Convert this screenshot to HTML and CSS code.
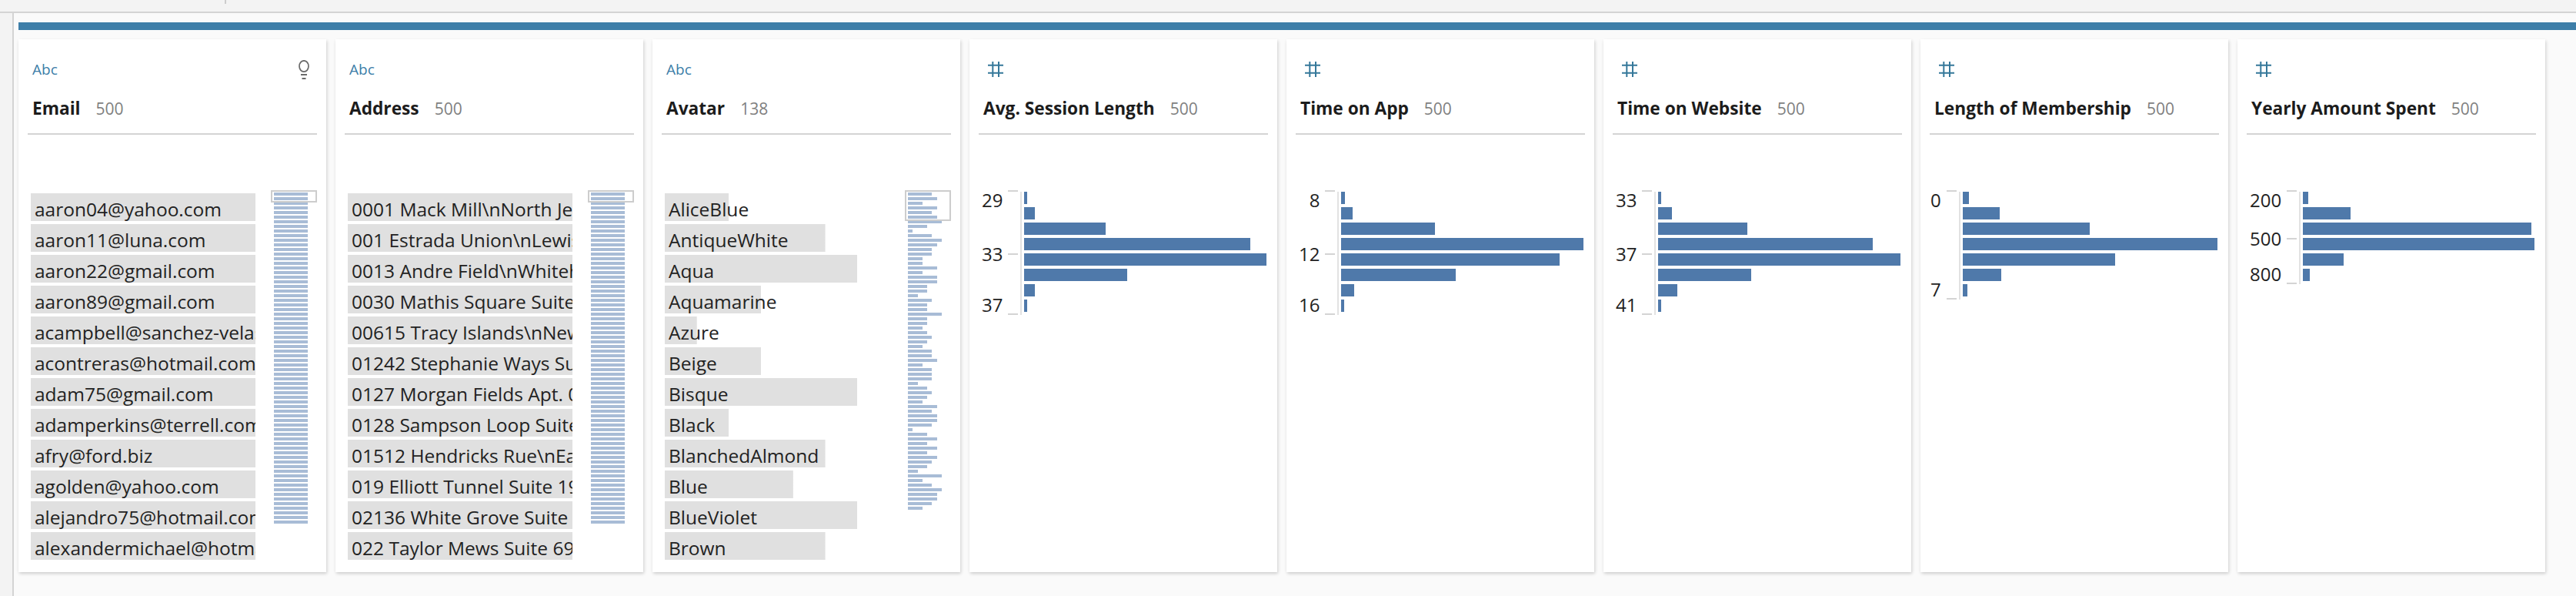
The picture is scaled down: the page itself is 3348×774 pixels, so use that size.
FILE: index.html
```html
<!DOCTYPE html>
<html>
<head>
    <meta charset="UTF-8">
    <title>Profile</title>
    <link rel="stylesheet" href="styles.css">
</head>
<body>
    <div class="topbar"><span class="topbar-tick"></span></div>
    <div class="page">
        <div class="rail"></div>
        <div class="content">
            <div class="step-bar"></div>
            <div class="cards">

                <div class="card">
                    <div class="card-head">
                        <div class="type-row">
                            <span class="type-abc">Abc</span>
                            <svg class="bulb" width="14" height="25" viewBox="0 0 14 25"><ellipse cx="7" cy="8" rx="6" ry="7.2" fill="none" stroke="#6a6a6a" stroke-width="1.7"/><path d="M3 19h8M4.5 24h5" stroke="#6a6a6a" stroke-width="2" fill="none"/></svg>
                        </div>
                        <div class="title-row"><span class="title">Email</span><span class="count">500</span></div>
                    </div>
                    <div class="card-body">
                        <div class="rows">
                            <div class="row">aaron04@yahoo.com</div>
                            <div class="row">aaron11@luna.com</div>
                            <div class="row">aaron22@gmail.com</div>
                            <div class="row">aaron89@gmail.com</div>
                            <div class="row">acampbell@sanchez-velasquez.com</div>
                            <div class="row">acontreras@hotmail.com</div>
                            <div class="row">adam75@gmail.com</div>
                            <div class="row">adamperkins@terrell.com</div>
                            <div class="row">afry@ford.biz</div>
                            <div class="row">agolden@yahoo.com</div>
                            <div class="row">alejandro75@hotmail.com</div>
                            <div class="row">alexandermichael@hotmail.com</div>
                        </div>
                        <div class="minimap minimap-full"><div class="viewport"></div></div>
                    </div>
                </div>

                <div class="card">
                    <div class="card-head">
                        <div class="type-row"><span class="type-abc">Abc</span></div>
                        <div class="title-row"><span class="title">Address</span><span class="count">500</span></div>
                    </div>
                    <div class="card-body">
                        <div class="rows">
                            <div class="row">0001 Mack Mill\nNorth Jerry</div>
                            <div class="row">001 Estrada Union\nLewisburgh</div>
                            <div class="row">0013 Andre Field\nWhitehaven</div>
                            <div class="row">0030 Mathis Square Suite 100</div>
                            <div class="row">00615 Tracy Islands\nNew Paul</div>
                            <div class="row">01242 Stephanie Ways Suite 100</div>
                            <div class="row">0127 Morgan Fields Apt. 001</div>
                            <div class="row">0128 Sampson Loop Suite 100</div>
                            <div class="row">01512 Hendricks Rue\nEast Ann</div>
                            <div class="row">019 Elliott Tunnel Suite 199</div>
                            <div class="row">02136 White Grove Suite 100</div>
                            <div class="row">022 Taylor Mews Suite 699</div>
                        </div>
                        <div class="minimap minimap-full"><div class="viewport"></div></div>
                    </div>
                </div>

                <div class="card">
                    <div class="card-head">
                        <div class="type-row"><span class="type-abc">Abc</span></div>
                        <div class="title-row"><span class="title">Avatar</span><span class="count">138</span></div>
                    </div>
                    <div class="card-body">
                        <div class="rows">
                            <div class="row" style="background-size: 28.57% 100%">AliceBlue</div>
                            <div class="row" style="background-size: 71.43% 100%">AntiqueWhite</div>
                            <div class="row" style="background-size: 85.71% 100%">Aqua</div>
                            <div class="row" style="background-size: 42.86% 100%">Aquamarine</div>
                            <div class="row" style="background-size: 14.29% 100%">Azure</div>
                            <div class="row" style="background-size: 42.86% 100%">Beige</div>
                            <div class="row" style="background-size: 85.71% 100%">Bisque</div>
                            <div class="row" style="background-size: 28.57% 100%">Black</div>
                            <div class="row" style="background-size: 71.43% 100%">BlanchedAlmond</div>
                            <div class="row" style="background-size: 57.14% 100%">Blue</div>
                            <div class="row" style="background-size: 85.71% 100%">BlueViolet</div>
                            <div class="row" style="background-size: 71.43% 100%">Brown</div>
                        </div>
                        <div class="minimap" id="avatarMap"><div class="viewport viewport-tall"></div></div>
                    </div>
                </div>

                <div class="card">
                    <div class="card-head">
                        <div class="type-row"><svg class="hash" width="20" height="20" viewBox="0 0 20 20"><path d="M6.3 0v20M14 0v20M0 4.7h20M0 14.7h20"/></svg></div>
                        <div class="title-row"><span class="title">Avg. Session Length</span><span class="count">500</span></div>
                    </div>
                    <div class="card-body">
                        <div class="chart">
                            <div class="axis">
                                <div class="tick"><span>29</span></div>
                                <div class="tick tick-mid"><span>33</span></div>
                                <div class="tick tick-end"><span>37</span></div>
                            </div>
                            <div class="axis-line"></div>
                            <div class="bars">
                                <div class="bar" style="width: 1%"></div>
                                <div class="bar" style="width: 4.4%"></div>
                                <div class="bar" style="width: 33.6%"></div>
                                <div class="bar" style="width: 93.2%"></div>
                                <div class="bar" style="width: 100%"></div>
                                <div class="bar" style="width: 42.4%"></div>
                                <div class="bar" style="width: 4.4%"></div>
                                <div class="bar" style="width: 1%"></div>
                            </div>
                        </div>
                    </div>
                </div>

                <div class="card">
                    <div class="card-head">
                        <div class="type-row"><svg class="hash" width="20" height="20" viewBox="0 0 20 20"><path d="M6.3 0v20M14 0v20M0 4.7h20M0 14.7h20"/></svg></div>
                        <div class="title-row"><span class="title">Time on App</span><span class="count">500</span></div>
                    </div>
                    <div class="card-body">
                        <div class="chart">
                            <div class="axis">
                                <div class="tick"><span>8</span></div>
                                <div class="tick tick-mid"><span>12</span></div>
                                <div class="tick tick-end"><span>16</span></div>
                            </div>
                            <div class="axis-line"></div>
                            <div class="bars">
                                <div class="bar" style="width: 1.4%"></div>
                                <div class="bar" style="width: 4.6%"></div>
                                <div class="bar" style="width: 38.6%"></div>
                                <div class="bar" style="width: 100%"></div>
                                <div class="bar" style="width: 90.2%"></div>
                                <div class="bar" style="width: 47.2%"></div>
                                <div class="bar" style="width: 5.3%"></div>
                                <div class="bar" style="width: 1%"></div>
                            </div>
                        </div>
                    </div>
                </div>

                <div class="card">
                    <div class="card-head">
                        <div class="type-row"><svg class="hash" width="20" height="20" viewBox="0 0 20 20"><path d="M6.3 0v20M14 0v20M0 4.7h20M0 14.7h20"/></svg></div>
                        <div class="title-row"><span class="title">Time on Website</span><span class="count">500</span></div>
                    </div>
                    <div class="card-body">
                        <div class="chart">
                            <div class="axis">
                                <div class="tick"><span>33</span></div>
                                <div class="tick tick-mid"><span>37</span></div>
                                <div class="tick tick-end"><span>41</span></div>
                            </div>
                            <div class="axis-line"></div>
                            <div class="bars">
                                <div class="bar" style="width: 1%"></div>
                                <div class="bar" style="width: 5.6%"></div>
                                <div class="bar" style="width: 36.6%"></div>
                                <div class="bar" style="width: 88.4%"></div>
                                <div class="bar" style="width: 100%"></div>
                                <div class="bar" style="width: 38.4%"></div>
                                <div class="bar" style="width: 7.9%"></div>
                                <div class="bar" style="width: 1%"></div>
                            </div>
                        </div>
                    </div>
                </div>

                <div class="card">
                    <div class="card-head">
                        <div class="type-row"><svg class="hash" width="20" height="20" viewBox="0 0 20 20"><path d="M6.3 0v20M14 0v20M0 4.7h20M0 14.7h20"/></svg></div>
                        <div class="title-row"><span class="title">Length of Membership</span><span class="count">500</span></div>
                    </div>
                    <div class="card-body">
                        <div class="chart chart-narrow">
                            <div class="axis">
                                <div class="tick"><span>0</span></div>
                                <div class="tick tick-end"><span>7</span></div>
                            </div>
                            <div class="axis-line"></div>
                            <div class="bars">
                                <div class="bar" style="width: 2.5%"></div>
                                <div class="bar" style="width: 14.7%"></div>
                                <div class="bar" style="width: 49.8%"></div>
                                <div class="bar" style="width: 100%"></div>
                                <div class="bar" style="width: 60%"></div>
                                <div class="bar" style="width: 15.2%"></div>
                                <div class="bar" style="width: 2%"></div>
                            </div>
                        </div>
                    </div>
                </div>

                <div class="card">
                    <div class="card-head">
                        <div class="type-row"><svg class="hash" width="20" height="20" viewBox="0 0 20 20"><path d="M6.3 0v20M14 0v20M0 4.7h20M0 14.7h20"/></svg></div>
                        <div class="title-row"><span class="title">Yearly Amount Spent</span><span class="count">500</span></div>
                    </div>
                    <div class="card-body">
                        <div class="chart">
                            <div class="axis">
                                <div class="tick"><span>200</span></div>
                                <div class="tick tick-mid"><span>500</span></div>
                                <div class="tick tick-end"><span>800</span></div>
                            </div>
                            <div class="axis-line"></div>
                            <div class="bars">
                                <div class="bar" style="width: 2.4%"></div>
                                <div class="bar" style="width: 20.4%"></div>
                                <div class="bar" style="width: 98.7%"></div>
                                <div class="bar" style="width: 100%"></div>
                                <div class="bar" style="width: 17.4%"></div>
                                <div class="bar" style="width: 2.9%"></div>
                            </div>
                        </div>
                    </div>
                </div>

            </div>
        </div>
    </div>

    <script>
        // avatar value counts, in the order of the list
        var counts = [5,6,3,6,5,6,7,4,1,5,7,6,5,5,3,3,6,3,6,6,4,4,2,5,4,4,7,4,4,3,4,5,4,3,5,5,6,3,5,5,5,2,4,5,4,3,6,5,6,6,5,1,4,6,4,6,4,6,5,4,2,7,3,5,7,6,6,5,3];
        var map = document.getElementById("avatarMap");
        counts.forEach(function (n) {
            var line = document.createElement("div");
            line.className = "minimap-line";
            line.style.width = (n / 7 * 100) + "%";
            map.appendChild(line);
        });
    </script>
</body>
</html>
```

FILE: styles.css
```css
body {
    font-family: "Open Sans", "Liberation Sans", sans-serif;
    background-color: #fafafa;
    color: #222;
    margin: 0;
    padding: 0;
    height: 774px;
    overflow: hidden;
}

.topbar {
    height: 15px;
    background-color: #f3f3f3;
    border-bottom: 2px solid #d4d4d4;
}

.topbar-tick {
    display: block;
    width: 2px;
    height: 5px;
    margin-left: 292px;
    background-color: #ccc;
}

.page {
    display: flex;
    height: 757px;
}

.rail {
    width: 16px;
    background-color: #f3f3f3;
    border-right: 2px solid #d4d4d4;
}

.content {
    flex: 1;
    padding: 12px 0 0 6px;
}

.step-bar {
    height: 10px;
    background-color: #3d7ea8;
    margin-bottom: 12px;
}

.cards {
    display: flex;
    gap: 12px;
}

.card {
    width: 400px;
    height: 692px;
    background-color: white;
    box-shadow: 1px 2px 4px rgba(0, 0, 0, 0.18);
}

.card-head {
    height: 124px;
    margin: 0 12px;
    padding: 0 6px;
    box-sizing: border-box;
    border-bottom: 2px solid #d4d4d4;
}

.type-row {
    display: flex;
    justify-content: space-between;
    align-items: center;
    height: 24px;
    padding-top: 27px;
}

.type-abc {
    font-size: 19px;
    color: #3d7ea8;
}

.bulb {
    margin-right: 4px;
}

.hash {
    margin-left: 6px;
    fill: none;
    stroke: #35789a;
    stroke-width: 2;
}

.title-row {
    display: flex;
    align-items: baseline;
    gap: 20px;
    margin-top: 22px;
    line-height: 34px;
}

.title {
    font-size: 22.7px;
    font-weight: 700;
    color: #1c1c1c;
}

.count {
    font-size: 21px;
    color: #808080;
}

.card-body {
    display: flex;
    padding: 76px 14px 0 16px;
}

.rows {
    width: 292px;
    flex: none;
}

.row {
    height: 36px;
    margin-bottom: 4px;
    padding: 3px 0 0 5px;
    box-sizing: border-box;
    font-size: 24.5px;
    line-height: 36px;
    white-space: nowrap;
    overflow: hidden;
    background-image: linear-gradient(#e0e0e0, #e0e0e0);
    background-repeat: no-repeat;
}

.minimap {
    position: relative;
    display: flex;
    flex-direction: column;
    gap: 2px;
    width: 44px;
    height: 430px;
    margin: -1px 0 0 24px;
}

.minimap-full {
    background: repeating-linear-gradient(#a8bcd6 0 4px, transparent 4px 6px);
}

.minimap-line {
    height: 4px;
    flex: none;
    background-color: #a8bcd6;
}

.viewport {
    position: absolute;
    left: -4px;
    top: -3px;
    width: 60px;
    height: 16px;
    box-sizing: border-box;
    border: 2px solid #cdcdcd;
}

.viewport-tall {
    height: 40px;
}

.chart {
    display: flex;
    flex: 1;
    align-items: flex-start;
    margin-top: -4px;
}

.chart-narrow {
    margin-left: -3px;
}

.axis {
    display: flex;
    flex-direction: column;
    justify-content: space-between;
    align-self: stretch;
}

.tick {
    display: flex;
    justify-content: flex-end;
    gap: 7px;
    font-size: 24px;
    line-height: 26px;
}

.tick::after {
    content: "";
    width: 13px;
    height: 2px;
    background-color: #d4d4d4;
}

.tick-mid {
    margin-top: 4px;
    align-items: center;
}

.tick-end {
    align-items: flex-end;
}

.axis-line {
    width: 2px;
    margin: 2px 3px 0;
    align-self: stretch;
    background-color: #e2e2e2;
}

.bars {
    flex: 1;
    padding: 2px 0 4px;
}

.bar {
    height: 16px;
    background-color: #4f79aa;
    margin-bottom: 4px;
}

.bar:last-child {
    margin-bottom: 0;
}
```
